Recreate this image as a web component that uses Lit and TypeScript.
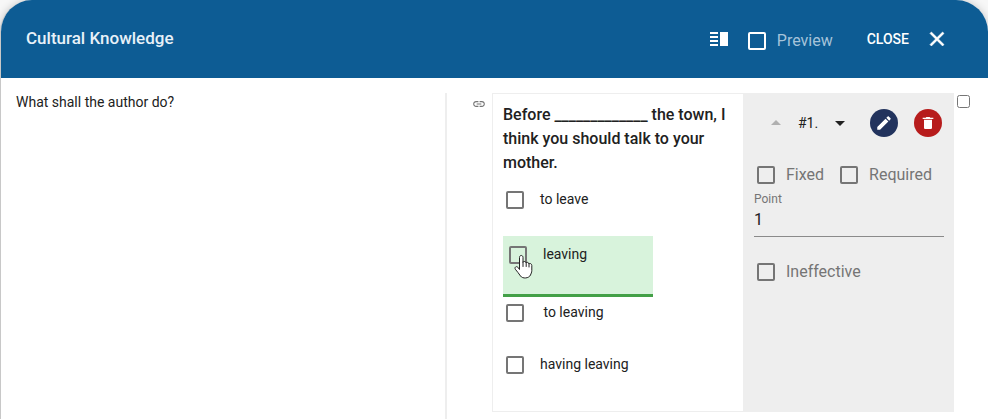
import { LitElement, html, css, nothing } from "lit";
import { customElement, state } from "lit/decorators.js";
import { classMap } from "lit/directives/class-map.js";

interface Answer {
  text: string;
  correct?: boolean;
}

@customElement("app-root")
export class AppRoot extends LitElement {
  static styles = css`
    :host {
      display: block;
      font-family: Roboto, "Liberation Sans", sans-serif;
      font-size: 14px;
      line-height: 18px;
      color: #212121;
      background: #f7f7f7;
    }
    * {
      box-sizing: border-box;
    }
    .dialog {
      display: flex;
      flex-direction: column;
      min-height: 100vh;
      border-left: 1px solid #c8c8c8;
      border-radius: 32px 32px 0 0;
      background: #fff;
      box-shadow: 0 0 8px rgba(0, 0, 0, 0.2);
      overflow: hidden;
    }
    .header {
      display: flex;
      align-items: center;
      height: 78px;
      padding: 0 39px 0 25px;
      background: #0d5c94;
      color: #fff;
    }
    .title {
      flex: 1;
      margin: 0 0 2px;
      font-size: 17px;
      font-weight: 500;
      color: #e8f1f8;
    }
    button {
      display: inline-flex;
      align-items: center;
      justify-content: center;
      padding: 0;
      border: 0;
      background: none;
      color: inherit;
      font: inherit;
      cursor: pointer;
    }
    svg {
      display: block;
      fill: currentColor;
    }
    .check {
      display: inline-flex;
      align-items: center;
      gap: 11px;
      font-size: 16px;
      color: #757575;
    }
    .check input,
    .answer input {
      appearance: none;
      flex: none;
      width: 18px;
      height: 18px;
      margin: 0;
      border: 2px solid #757575;
      border-radius: 2px;
    }
    .check.preview {
      margin: 3px 34px 0 17px;
      color: #a5c3da;
    }
    .check.preview input {
      border-color: #fff;
    }
    .close {
      gap: 16px;
      font-weight: 500;
    }
    .body {
      flex: 1;
      display: grid;
      grid-template-columns: 444fr 543fr;
      padding-top: 15px;
    }
    .passage {
      padding: 0 15px;
    }
    .passage p {
      margin: 0;
    }
    .work {
      display: flex;
      align-items: flex-start;
      padding: 0 18px 7px 25px;
      border-left: 2px solid #eee;
    }
    .link {
      flex: none;
      margin: 4px 6px 0 0;
      color: #757575;
    }
    .card {
      flex: 1;
      display: grid;
      grid-template-columns: 251fr 211fr;
      background: #eee;
    }
    .question {
      padding: 9px 10px 10px;
      border: 1px solid #eee;
      border-right: 0;
      background: #fff;
    }
    .prompt {
      margin: 0 0 9px;
      font-size: 16px;
      line-height: 24px;
      font-weight: 500;
    }
    .answer {
      position: relative;
      width: 150px;
    }
    .answer.correct {
      padding: 3px;
      border-bottom: 3px solid #43a047;
      background: #d8f3dc;
    }
    .answer label {
      display: flex;
      align-items: flex-start;
      gap: 16px;
      height: 52px;
      padding: 7px 0 0 3px;
      white-space: pre;
    }
    .answer .text {
      line-height: 16px;
    }
    .pointer {
      position: absolute;
      left: 11px;
      top: 18px;
    }
    .side {
      padding: 16px 10px 0 11px;
    }
    .tools {
      display: flex;
      align-items: center;
      padding-left: 10px;
    }
    .tools .number {
      margin: 0 10px;
    }
    .up {
      color: #b0b0b0;
    }
    .round {
      width: 28px;
      height: 28px;
      border-radius: 50%;
      color: #fff;
    }
    .edit {
      margin: 0 16px 0 auto;
      background: #22335d;
    }
    .delete {
      margin-right: 2px;
      background: #b71c1c;
    }
    .flags {
      display: flex;
      gap: 16px;
      margin: 29px 0 6px;
      padding-left: 3px;
    }
    .field label {
      display: block;
      font-size: 12px;
      line-height: 18px;
      color: #757575;
    }
    .field input {
      display: block;
      width: 100%;
      height: 29px;
      padding: 0 0 6px;
      border: 0;
      border-bottom: 1px solid #8a8a8a;
      background: none;
      color: #212121;
      font: inherit;
      font-size: 16px;
    }
    .check.ineffective {
      margin: 26px 0 0 3px;
    }
    .select {
      flex: none;
      width: 13px;
      height: 13px;
      margin: 2px 0 0 3px;
    }
  `;

  @state() private answers: Answer[] = [
    { text: "to leave" },
    { text: "leaving", correct: true },
    { text: "\u00a0to leaving" },
    { text: "having leaving" },
  ];

  private pointer() {
    return html`<svg class="pointer" width="20" height="26" viewBox="0 0 20 26" aria-hidden="true">
      <path
        d="M5.500 15.500V3.500C5.500 .8 9 .8 9 3.500V8.300C9.500 7 12 7.200 12.200 9C12.600 7.800 14.800 8.200 15 10C15.500 9 17.800 9.500 17.800 11.500V16.500C17.800 18.500 17 19.500 16.500 21C15 24.500 8.500 25 6.500 22C5 19.500 3 17.500 1.300 15.200C.300 13.300 2.300 11.800 3.800 13.200L5.500 15.500Z"
        fill="#fff"
        stroke="#222"
        stroke-linejoin="round"
      />
      <path d="M9 8V12.500M12.200 9V12.500M15 10V13" fill="none" stroke="#222" stroke-linecap="round" />
    </svg>`;
  }

  private answer(a: Answer) {
    return html`<div class=${classMap({ answer: true, correct: !!a.correct })}>
      <label><input type="checkbox" /><span class="text">${a.text}</span></label>
      ${a.correct ? this.pointer() : nothing}
    </div>`;
  }

  render() {
    return html`
      <div class="dialog">
        <header class="header">
          <h1 class="title">Cultural Knowledge</h1>
          <button aria-label="Split view">
            <svg width="24" height="24" viewBox="0 0 24 24">
              <path d="M3 15h8v-2H3v2zm0 4h8v-2H3v2zm0-8h8V9H3v2zm0-6v2h8V5H3zm10 0h8v14h-8V5z" />
            </svg>
          </button>
          <label class="check preview"><input type="checkbox" />Preview</label>
          <button class="close">
            CLOSE
            <svg width="24" height="24" viewBox="0 0 24 24" aria-hidden="true">
              <path
                d="M19 6.410 17.590 5 12 10.590 6.410 5 5 6.410 10.590 12 5 17.590 6.410 19 12 13.410 17.590 19 19 17.590 13.410 12z"
                stroke="currentColor"
                stroke-width=".6"
              />
            </svg>
          </button>
        </header>
        <main class="body">
          <section class="passage"><p>What shall the author do?</p></section>
          <section class="work">
            <svg class="link" width="14" height="14" viewBox="0 0 24 24" aria-hidden="true">
              <path
                d="M3.900 12c0-1.710 1.390-3.100 3.100-3.100h4V7H7c-2.760 0-5 2.240-5 5s2.240 5 5 5h4v-1.900H7c-1.710 0-3.100-1.390-3.100-3.100zM8 13h8v-2H8v2zm9-6h-4v1.900h4c1.710 0 3.100 1.390 3.100 3.100s-1.390 3.100-3.100 3.100h-4V17h4c2.760 0 5-2.240 5-5s-2.240-5-5-5z"
              />
            </svg>
            <article class="card">
              <div class="question">
                <p class="prompt">Before _____________ the town, I think you should talk to your mother.</p>
                ${this.answers.map((a) => this.answer(a))}
              </div>
              <aside class="side">
                <div class="tools">
                  <button class="up" aria-label="Move up" disabled>
                    <svg width="24" height="24" viewBox="0 0 24 24"><path d="m7 14 5-5 5 5z" /></svg>
                  </button>
                  <span class="number">#1.</span>
                  <button aria-label="Move down">
                    <svg width="24" height="24" viewBox="0 0 24 24"><path d="m7 10 5 5 5-5z" /></svg>
                  </button>
                  <button class="round edit" aria-label="Edit">
                    <svg width="18" height="18" viewBox="0 0 24 24">
                      <path
                        d="M3 17.250V21h3.750L17.810 9.940l-3.750-3.750L3 17.250zM20.710 7.040c.390-.390.390-1.020 0-1.410l-2.340-2.340c-.390-.390-1.020-.390-1.410 0l-1.830 1.830 3.750 3.750 1.830-1.830z"
                      />
                    </svg>
                  </button>
                  <button class="round delete" aria-label="Delete">
                    <svg width="16" height="16" viewBox="0 0 24 24">
                      <path d="M6 19c0 1.100.900 2 2 2h8c1.100 0 2-.900 2-2V7H6v12zM20 4h-4.500l-1-1h-5l-1 1H4v2h16V4z" />
                    </svg>
                  </button>
                </div>
                <div class="flags">
                  <label class="check"><input type="checkbox" />Fixed</label>
                  <label class="check"><input type="checkbox" />Required</label>
                </div>
                <div class="field">
                  <label for="point">Point</label>
                  <input id="point" type="text" value="1" />
                </div>
                <label class="check ineffective"><input type="checkbox" />Ineffective</label>
              </aside>
            </article>
            <input class="select" type="checkbox" aria-label="Select question" />
          </section>
        </main>
      </div>
    `;
  }
}
